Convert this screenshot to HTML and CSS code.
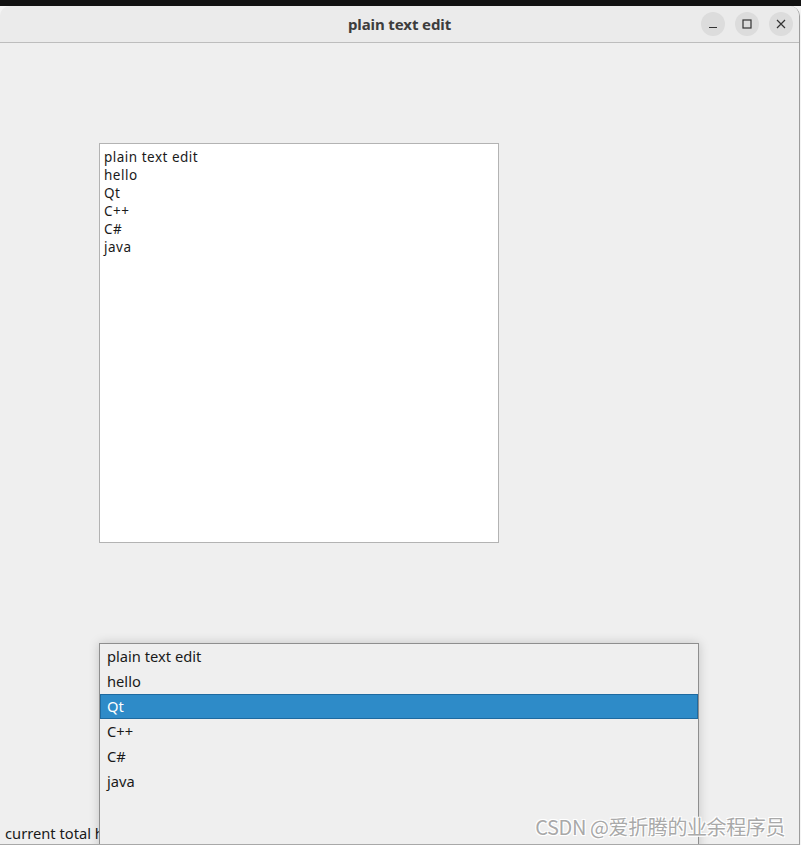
FILE: index.html
```html
<!DOCTYPE html>
<html>
<head>
<meta charset="utf-8">
<link rel="stylesheet" href="styles.css">
</head>
<body>
<div class="topbar"></div>
<div class="window">
  <div class="titlebar">
    <span class="title">plain text edit</span>
    <div class="controls">
      <span class="wbtn"><svg width="10" height="10" viewBox="0 0 10 10"><path d="M1 8.5h8" stroke="#333" stroke-width="1.2"/></svg></span>
      <span class="wbtn"><svg width="10" height="10" viewBox="0 0 10 10"><rect x="1" y="1" width="8" height="8" fill="none" stroke="#333" stroke-width="1.2"/></svg></span>
      <span class="wbtn"><svg width="10" height="10" viewBox="0 0 10 10"><path d="M1 1L9 9M9 1L1 9" stroke="#333" stroke-width="1.2"/></svg></span>
    </div>
  </div>
  <div class="content">
    <div class="textedit">
      <div>plain text edit</div>
      <div>hello</div>
      <div>Qt</div>
      <div>C++</div>
      <div>C#</div>
      <div>java</div>
    </div>
    <div class="bottom">
      <div class="label">current total height</div>
      <ul class="list">
        <li>plain text edit</li>
        <li>hello</li>
        <li class="sel">Qt</li>
        <li>C++</li>
        <li>C#</li>
        <li>java</li>
      </ul>
      <div class="watermark">CSDN @爱折腾的业余程序员</div>
    </div>
  </div>
</div>
</body>
</html>
```

FILE: styles.css
```css
html, body {
  margin: 0;
  padding: 0;
  background: #f4f4f4;
  width: 801px;
  height: 845px;
  overflow: hidden;
  font-family: "Noto Sans", "Open Sans", sans-serif;
}
.topbar {
  height: 6px;
  background: #121212;
}
.window {
  width: 800px;
  height: 839px;
  background: #efefef;
  border-radius: 10px 10px 0 0;
  border-right: 1px solid #9c9c9c;
  border-bottom: 1px solid #a8a8a8;
  overflow: hidden;
  box-sizing: border-box;
}
.titlebar {
  height: 36px;
  background: #ebebeb;
  border-bottom: 1px solid #bdbdbd;
  display: flex;
  align-items: center;
  justify-content: center;
  position: relative;
}
.title {
  font-weight: bold;
  font-size: 15px;
  color: #3d3d3d;
  letter-spacing: -0.1px;
}
.controls {
  position: absolute;
  right: 6px;
  top: 6px;
  display: flex;
  gap: 10px;
}
.wbtn {
  width: 24px;
  height: 24px;
  border-radius: 50%;
  background: #dcdcdc;
  display: flex;
  align-items: center;
  justify-content: center;
}
.content {
  padding: 100px 0 0 99px;
  font-size: 14.7px;
  color: #1a1a1a;
}
.textedit {
  width: 400px;
  height: 400px;
  box-sizing: border-box;
  background: #fff;
  border: 1px solid #b3b3b3;
  padding: 4px 4px;
  font-size: 13.5px;
  letter-spacing: 0.5px;
  line-height: 18px;
}
.bottom {
  position: relative;
  margin-left: -99px;
  height: 295px;
}
.label {
  position: absolute;
  left: 5px;
  top: 281px;
  line-height: 18px;
}
.list {
  position: absolute;
  left: 99px;
  top: 100px;
  width: 600px;
  height: 220px;
  margin: 0;
  padding: 0;
  list-style: none;
  box-sizing: border-box;
  background: #efefef;
  border: 1px solid #8e8e8e;
  box-shadow: 0 0 10px rgba(0,0,0,0.18);
}
.list li {
  height: 25px;
  line-height: 25px;
  padding-left: 7px;
  box-sizing: border-box;
}
.list li.sel {
  background: #2e8bc8;
  border: 1px solid #1e6aa0;
  color: #fff;
  line-height: 23px;
  padding-left: 6px;
}
.watermark {
  position: absolute;
  right: 14px;
  top: 269px;
  font-family: "Liberation Sans Narrow", "Noto Sans CJK SC", sans-serif;
  font-size: 20px;
  color: #a9a9a9;
  text-shadow: 1px 1px 0 #fff, -1px -1px 0 #fff, 1px -1px 0 #fff, -1px 1px 0 #fff;
  letter-spacing: -0.4px;
}
```
